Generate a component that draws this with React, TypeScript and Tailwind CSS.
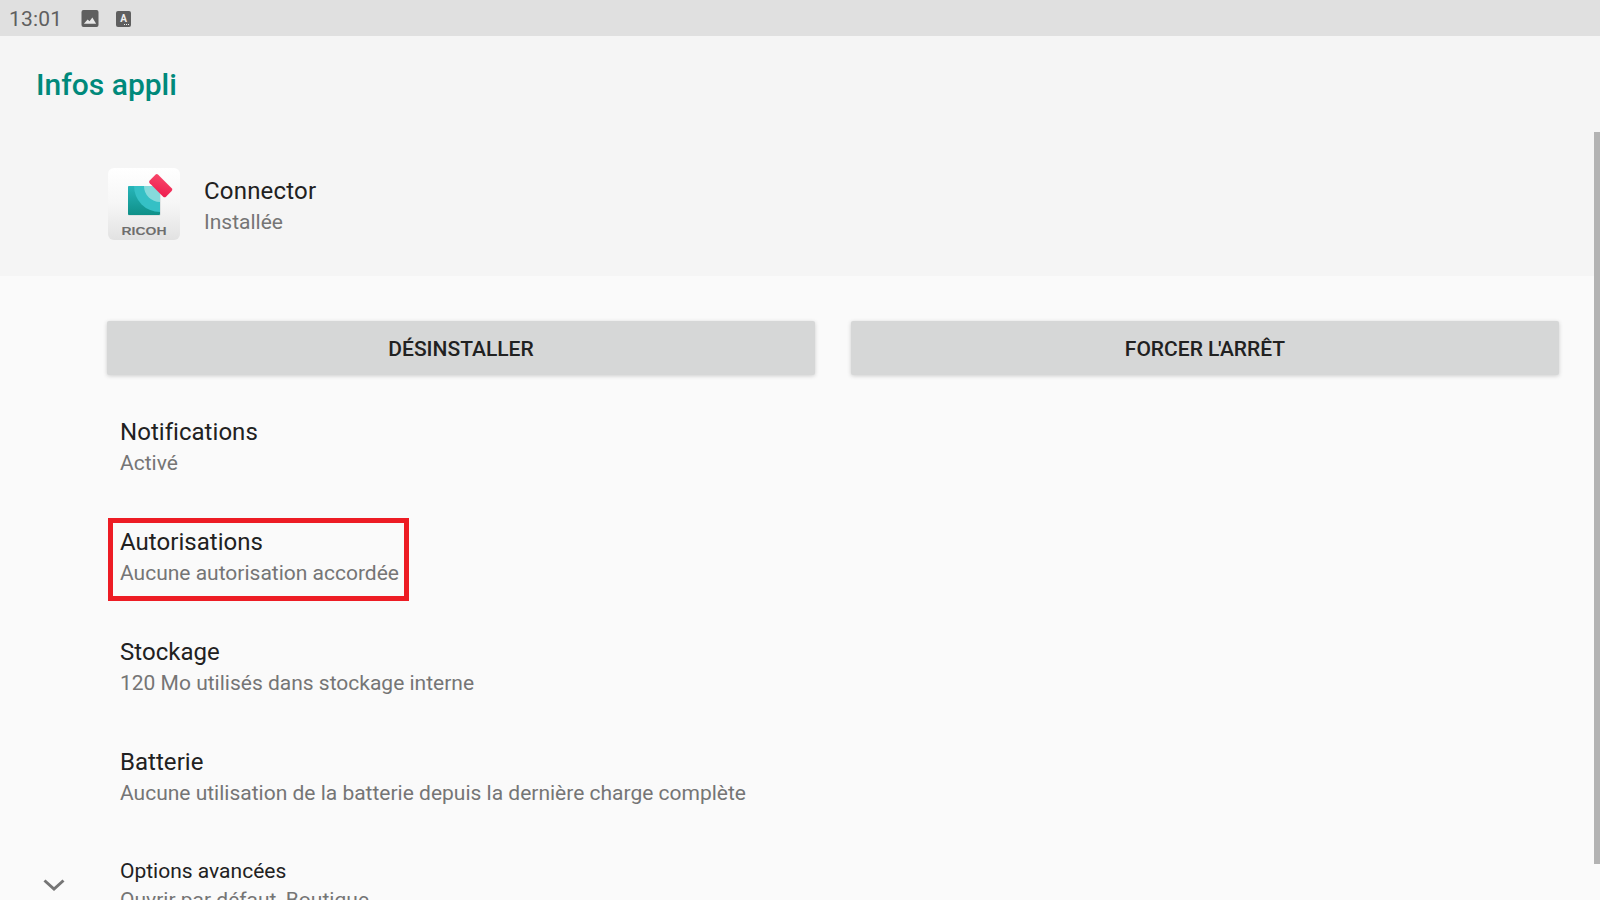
const rows = [
  { title: 'Notifications', sub: 'Activé' },
  { title: 'Autorisations', sub: 'Aucune autorisation accordée', marked: true },
  { title: 'Stockage', sub: '120 Mo utilisés dans stockage interne' },
  { title: 'Batterie', sub: 'Aucune utilisation de la batterie depuis la dernière charge complète' },
];

const AppIcon = () => (
  <svg width="72" height="72" viewBox="0 0 72 72" className="shrink-0">
    <defs>
      <linearGradient id="tile" x1="0" y1="0" x2="0" y2="1">
        <stop offset="0" stopColor="#ffffff" />
        <stop offset="0.5" stopColor="#f6f6f6" />
        <stop offset="1" stopColor="#e2e2e2" />
      </linearGradient>
      <linearGradient id="sq" x1="0" y1="0" x2="0" y2="1">
        <stop offset="0" stopColor="#27b5ba" />
        <stop offset="1" stopColor="#0f9088" />
      </linearGradient>
      <linearGradient id="tag" x1="0" y1="0" x2="1" y2="1">
        <stop offset="0" stopColor="#f8476a" />
        <stop offset="1" stopColor="#ee1c4e" />
      </linearGradient>
      <clipPath id="sqclip">
        <rect x="20" y="18" width="32" height="29" rx="1" />
      </clipPath>
    </defs>
    <rect width="72" height="72" rx="6" fill="url(#tile)" />
    <rect x="20" y="18" width="32.5" height="29.6" rx="1" fill="#c9d4d4" />
    <rect x="20" y="18" width="32" height="29" rx="1" fill="url(#sq)" />
    <g clipPath="url(#sqclip)">
      <circle cx="52" cy="18" r="26" fill="#35c0c5" />
      <circle cx="52" cy="18" r="16" fill="#86dadb" />
    </g>
    <rect x="41.2" y="11.7" width="23" height="12" rx="2" transform="rotate(45 52.7 17.7)" fill="url(#tag)" />
    <text
      x="36"
      y="66.5"
      textAnchor="middle"
      textLength="45"
      lengthAdjust="spacingAndGlyphs"
      fontFamily="Liberation Sans, sans-serif"
      fontWeight="700"
      fontSize="10.5"
      fill="#6e6e6e"
    >
      RICOH
    </text>
  </svg>
);

export default function App() {
  return (
    <div className="relative h-[900px] w-[1600px] overflow-hidden bg-[#fafafa] font-['Roboto',sans-serif]">
      {/* status bar */}
      <div className="flex h-9 items-center bg-[#e0e0e0] pl-[9px] text-[#5f5f5f]">
        <span className="pt-[2px] text-[21px] leading-none tracking-[0.2px]">13:01</span>
        <svg width="18" height="17" viewBox="0 0 18 18" className="ml-[19px] mt-px">
          <rect width="18" height="18" rx="2" fill="#5f5f5f" />
          <path d="M2.5 14.5 L6.5 10 L8.5 12 L11.5 8 L15.5 14.5 Z" fill="#e8e8e8" />
        </svg>
        <svg width="16" height="16" viewBox="0 0 16 16" className="ml-[17px] mt-px">
          <rect width="15" height="16" rx="2" fill="#5f5f5f" />
          <text x="7.5" y="10.5" textAnchor="middle" fontFamily="Roboto, sans-serif" fontWeight="700" fontSize="10" fill="#f0f0f0">
            A
          </text>
          <path d="M8 13h1v1H8zM10 13h1v1h-1zM12 13h1v1h-1z" fill="#f0f0f0" />
        </svg>
      </div>

      {/* header */}
      <div className="h-[240px] bg-[#f5f5f5]">
        <h1 className="pl-9 pt-[29px] text-[30px] leading-[40px] font-medium text-[#00897b]">Infos appli</h1>
        <div className="mt-[63px] flex items-center pl-[108px]">
          <AppIcon />
          <div className="ml-[24px] pt-[5px]">
            <div className="text-[24px] leading-[31px] tracking-[0.2px] text-[#212121]">Connector</div>
            <div className="text-[21px] leading-[30px] text-[#757575]">Installée</div>
          </div>
        </div>
      </div>

      {/* buttons */}
      <div className="mt-[45px] flex gap-9 pl-[107px] pr-[41px]">
        <button className="h-[54px] flex-1 rounded-[2px] bg-[#d6d7d7] pt-1 text-[21px] font-medium text-[#212121] shadow-[0_1px_4px_rgba(0,0,0,0.18)]">
          DÉSINSTALLER
        </button>
        <button className="h-[54px] flex-1 rounded-[2px] bg-[#d6d7d7] pt-1 text-[21px] font-medium text-[#212121] shadow-[0_1px_4px_rgba(0,0,0,0.18)]">
          FORCER <span className="tracking-[-1.5px]">L'</span>ARRÊT
        </button>
      </div>

      {/* settings list */}
      <div className="mt-[27px] pl-[120px]">
        {rows.map((row) => (
          <div key={row.title} className="relative h-[110px] pt-[14px]">
            <div className="text-[24px] leading-[32px] tracking-[0.04px] text-[#212121]">{row.title}</div>
            <div className="text-[21px] leading-[30px] text-[#757575]">{row.sub}</div>
            {row.marked && (
              <div className="absolute left-[-12px] top-[6px] h-[83px] w-[301px] border-[5px] border-[#ed1c24]" />
            )}
          </div>
        ))}
        <div className="relative pt-[13px]">
          <div className="text-[21px] leading-[32px] text-[#212121]">Options avancées</div>
          <div className="text-[21px] leading-[26px] text-[#757575]">Ouvrir par défaut, Boutique</div>
          <svg width="24" height="14" viewBox="0 0 24 14" className="absolute left-[-78px] top-[36px]">
            <path d="M2.5 2.5 L12 11 L21.5 2.5" fill="none" stroke="#757575" strokeWidth="3" />
          </svg>
        </div>
      </div>

      {/* scrollbar */}
      <div className="absolute right-0 top-[132px] h-[732px] w-[6px] bg-[#b3b3b3]" />
    </div>
  );
}
